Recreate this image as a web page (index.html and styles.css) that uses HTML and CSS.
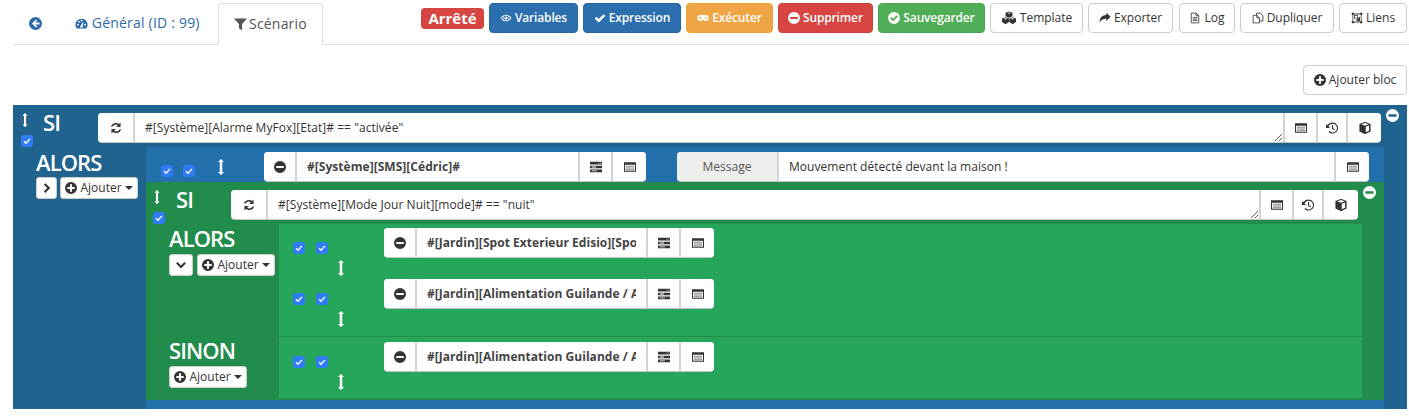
FILE: index.html
```html
<!DOCTYPE html>
<html lang="fr">
<head>
<meta charset="utf-8">
<title>Scénario</title>
<link rel="stylesheet" href="styles.css">
</head>
<body>
<svg class="defs" aria-hidden="true">
  <symbol id="i-back" viewBox="1 1 14 14"><path fill-rule="evenodd" d="M8 1a7 7 0 1 0 0 14A7 7 0 0 0 8 1zM8.6 3.600l1.300 1.300-2 2h4.400v2.200H7.900l2 2-1.300 1.300L4.200 8z"/></symbol>
  <symbol id="i-gauge" viewBox="0 1 16 14"><path fill-rule="evenodd" d="M8 2a7.500 7.500 0 0 0-7.500 7.500c0 1.600.5 3.100 1.400 4.300.2.200.4.200.6.200h11c.2 0 .4 0 .6-.2A7.500 7.500 0 0 0 8 2zM3.500 10.500a1.100 1.100 0 1 1 0-2.200 1.100 1.100 0 0 1 0 2.200zM5 6.800a1.100 1.100 0 1 1 0-2.200 1.100 1.100 0 0 1 0 2.200zM8 5.500a1.100 1.100 0 1 1 0-2.200 1.100 1.100 0 0 1 0 2.200zM9.500 12.300a1.800 1.800 0 0 1-3 0c-.3-.8 0-1.600.8-1.900l2.300-4.400 .8.300-1 4.700c.5.400.6 1 .1 1.300zM12.500 10.500a1.100 1.100 0 1 1 0-2.200 1.100 1.100 0 0 1 0 2.200z"/></symbol>
  <symbol id="i-filter" viewBox="1 2 14 13"><path d="M1 2h14L9.700 8v7L6.300 12.500V8z"/></symbol>
  <symbol id="i-eye" viewBox="0 0 18 16"><path fill-rule="evenodd" d="M9 3C5.500 3 2.500 5 .8 8c1.700 3 4.700 5 8.200 5s6.500-2 8.200-5C15.500 5 12.500 3 9 3zM9 11.800A3.800 3.800 0 1 1 9 4.200a3.800 3.800 0 0 1 0 7.600zM2.400 8c.8-1.200 1.900-2.100 3.100-2.800a4.800 4.800 0 0 0 0 5.600C4.300 10.100 3.200 9.200 2.400 8zM12.500 10.800a4.800 4.800 0 0 0 0-5.600c1.200.7 2.300 1.600 3.100 2.800-.8 1.200-1.900 2.100-3.100 2.800z"/><circle cx="9" cy="8" r="2.300"/></symbol>
  <symbol id="i-check" viewBox="0 0 16 16"><path d="M1 8.600l2.300-2.300 3 3 6.400-6.400L15 5.200l-8.700 8.700z"/></symbol>
  <symbol id="i-game" viewBox="0 0 18 16"><path fill-rule="evenodd" d="M5 3.500h8a4.500 4.500 0 0 1 0 9c-1.500 0-2.300-.8-3-1.500H8c-.7.700-1.500 1.500-3 1.500a4.500 4.500 0 0 1 0-9zM4.200 6v1.300H3v1.400h1.200V10h1.400V8.700h1.200V7.300H5.600V6zM12.500 6.300a1 1 0 1 0 0 2 1 1 0 0 0 0-2zM14.300 7.900a1 1 0 1 0 0 2 1 1 0 0 0 0-2z"/></symbol>
  <symbol id="i-minus" viewBox="1 1 14 14"><path fill-rule="evenodd" d="M8 1a7 7 0 1 0 0 14A7 7 0 0 0 8 1zM3.600 6.700h8.800v2.600H3.600z"/></symbol>
  <symbol id="i-plus" viewBox="1 1 14 14"><path fill-rule="evenodd" d="M8 1a7 7 0 1 0 0 14A7 7 0 0 0 8 1zM6.800 3.700h2.400v3.100h3.100v2.400H9.200v3.100H6.800V9.200H3.700V6.800h3.100z"/></symbol>
  <symbol id="i-okc" viewBox="1 1 14 14"><path fill-rule="evenodd" d="M8 1a7 7 0 1 0 0 14A7 7 0 0 0 8 1zM7 11.800L3.500 8.300l1.500-1.500 2 2 4-4 1.500 1.500z"/></symbol>
  <symbol id="i-cubes" viewBox="0 0 18 16"><path fill-rule="evenodd" d="M9 .5l4 1.600v3.900L9 7.700 5 6V2.100zM7 2.400L9 3.200l2-.8-2-.7zM5 7l4 1.600v3.900l-4 2.500-4-2.300V8.600zM3 8.900L5 9.700l2-.8-2-.8zM13 7l4 1.600v3.900L13 15l-3.600-2.300V8.600zM11 8.900l2 .8 2-.8-2-.8z"/></symbol>
  <symbol id="i-share" viewBox="0 0 16 16"><path d="M15.500 6.200L9.800 1v3C4 4.200 1 7.500.8 14c1.700-3.500 4.500-5.200 9-5.100v3.100z"/></symbol>
  <symbol id="i-file" viewBox="0 0 16 16"><path fill="none" stroke="currentColor" stroke-width="1.100" d="M3 1.500h6.500l3.500 3.500v9.500H3zM9.500 1.500V5H13M5 7.500h6M5 9.500h6M5 11.500h6"/></symbol>
  <symbol id="i-copy" viewBox="0 0 16 16"><path fill="none" stroke="currentColor" stroke-width="1.100" d="M6 4.500V1.500h5l3.500 3.500v7H10M1.500 4.500h5L10 8v6.500H1.500zM6.500 4.500V8H10"/></symbol>
  <symbol id="i-group" viewBox="0 0 16 16"><path fill-rule="evenodd" d="M1 1h3v1h8V1h3v3h-1v8h1v3h-3v-1H4v1H1v-3h1V4H1zM3 3.200V12.800h1 8 1V3.200H4zM4 4h5v4.500H4zM5 5v2.500h3V5zM7.500 9.500h1V8.500H10V6.500h2V12H7.500z"/></symbol>
  <symbol id="i-refresh" viewBox="1 1 14 14"><path d="M13.300 1.700v5.100H8.200l2-2A4.300 4.300 0 0 0 4 6.300H1.900a6.300 6.300 0 0 1 9.700-2.900zM2.700 14.300V9.200h5.100l-2 2A4.300 4.300 0 0 0 12 9.700h2.100a6.300 6.300 0 0 1-9.700 2.900z"/></symbol>
  <symbol id="i-history" viewBox="1 1 14 14"><path d="M8.500 1.500a6.500 6.500 0 1 1-4.600 11.100l1-1a5.100 5.100 0 1 0-1-5.300l1.900 1.700H1V3.200l1.700 1.700A6.500 6.500 0 0 1 8.500 1.500zM7.900 4.500h1.300v3.700l2.200 1.300-.7 1.100-2.800-1.700z"/></symbol>
  <symbol id="i-cube" viewBox="1 1 14 14"><path fill-rule="evenodd" d="M8 .8l6.500 2.400v9L8 15.200 1.500 12.200v-9zM3.600 3.600L8 5.300l4.400-1.700L8 2.200zM8.900 13l3.800-1.800V5L8.900 6.500z"/></symbol>
  <symbol id="i-list" viewBox="1 2 14 12"><path fill-rule="evenodd" d="M1 2.500h14v11H1zM2.200 5.500v7h11.600v-7z"/><path d="M3.200 6.500h9.600v1.300H3.200zM3.200 8.500h9.600v1.300H3.200zM3.200 10.500h9.600v1.300H3.200z" opacity=".6"/></symbol>
  <symbol id="i-server" viewBox="1 1 14 14"><path fill-rule="evenodd" d="M1 2h14v3H1zM1 6.500h14v3H1zM1 11h14v3H1zM11 3v1h1V3zM13 3v1h1V3zM3 7.500v1h5v-1zM3 12v1h6v-1z"/></symbol>
  <symbol id="i-right" viewBox="0 0 16 16"><path d="M4.800 1.500l6.500 6.500-6.500 6.500-2-2L7.300 8 2.800 3.500z" transform="translate(1)"/></symbol>
  <symbol id="i-down" viewBox="0 0 16 16"><path d="M1.500 6l2-2L8 8.500 12.500 4l2 2L8 12.500z"/></symbol>
  <symbol id="i-arrows" viewBox="0 0 8 16"><path d="M4 0l3 3H5.200v10H7l-3 3-3-3h1.800V3H1z"/></symbol>
  <symbol id="i-tick" viewBox="0 0 12 12"><path fill="none" stroke="#fff" stroke-width="1.400" d="M3 6.300l2 2 4-4.400"/></symbol>
</svg>

<header class="topbar">
  <nav class="tabs">
    <a class="tab tab-back"><svg class="ico ico-lg"><use href="#i-back"/></svg></a>
    <a class="tab tab-gen"><svg class="ico ico-lg"><use href="#i-gauge"/></svg> Général (ID : 99)</a>
    <a class="tab tab-active"><svg class="ico ico-lg"><use href="#i-filter"/></svg>Scénario</a>
  </nav>
  <div class="actions">
    <span class="badge">Arrêté</span>
    <button class="btn btn-blue btn-w89"><svg class="ico"><use href="#i-eye"/></svg> Variables</button>
    <button class="btn btn-blue btn-w98"><svg class="ico"><use href="#i-check"/></svg> Expression</button>
    <button class="btn btn-orange btn-w87"><svg class="ico"><use href="#i-game"/></svg> Exécuter</button>
    <button class="btn btn-red btn-w95"><svg class="ico"><use href="#i-minus"/></svg> Supprimer</button>
    <button class="btn btn-green btn-w107"><svg class="ico"><use href="#i-okc"/></svg> Sauvegarder</button>
    <button class="btn btn-w93"><svg class="ico ico-big"><use href="#i-cubes"/></svg> Template</button>
    <button class="btn btn-w85"><svg class="ico"><use href="#i-share"/></svg> Exporter</button>
    <button class="btn btn-w56"><svg class="ico"><use href="#i-file"/></svg> Log</button>
    <button class="btn btn-w94"><svg class="ico"><use href="#i-copy"/></svg> Dupliquer</button>
    <button class="btn btn-w68"><svg class="ico"><use href="#i-group"/></svg> Liens</button>
  </div>
</header>

<div class="toolbar">
  <button class="btn btn-w104"><svg class="ico"><use href="#i-plus"/></svg> Ajouter bloc</button>
</div>

<main class="block block-blue">
  <svg class="ico ico-close"><use href="#i-minus"/></svg>
  <div class="cond">
    <div class="cond-head">
      <div class="cond-mark"><svg class="arrows"><use href="#i-arrows"/></svg><span class="cb"><svg><use href="#i-tick"/></svg></span></div>
      <span class="title">SI</span>
    </div>
    <div class="group group-fill">
      <button class="addon addon-36"><svg class="ico"><use href="#i-refresh"/></svg></button>
      <textarea class="field field-area" spellcheck="false">#[Système][Alarme MyFox][Etat]# == "activée"</textarea>
      <button class="addon addon-33"><svg class="ico"><use href="#i-list"/></svg></button>
      <button class="addon addon-30"><svg class="ico"><use href="#i-history"/></svg></button>
      <button class="addon addon-34"><svg class="ico"><use href="#i-cube"/></svg></button>
    </div>
  </div>

  <section class="branch">
    <div class="branch-side side-top">
      <span class="title title-lg">ALORS</span>
      <div class="side-btns">
        <button class="btn-xs btn-square"><svg class="ico"><use href="#i-right"/></svg></button>
        <button class="btn-xs btn-add"><svg class="ico"><use href="#i-plus"/></svg> Ajouter <i class="caret"></i></button>
      </div>
    </div>
    <div class="branch-body body-blue">
      <div class="action-top">
        <span class="cb"><svg><use href="#i-tick"/></svg></span>
        <span class="cb cb-next"><svg><use href="#i-tick"/></svg></span>
        <svg class="arrows arrows-top"><use href="#i-arrows"/></svg>
        <div class="group group-cmd">
          <button class="addon addon-32"><svg class="ico"><use href="#i-minus"/></svg></button>
          <input class="field field-bold" value="#[Système][SMS][Cédric]#" spellcheck="false">
          <button class="addon addon-33"><svg class="ico"><use href="#i-server"/></svg></button>
          <button class="addon addon-34"><svg class="ico"><use href="#i-list"/></svg></button>
        </div>
        <div class="group group-msg">
          <span class="addon addon-label">Message</span>
          <input class="field" value="Mouvement détecté devant la maison !" spellcheck="false">
          <button class="addon addon-34"><svg class="ico"><use href="#i-list"/></svg></button>
        </div>
      </div>

      <div class="block block-green">
        <svg class="ico ico-close ico-close-in"><use href="#i-minus"/></svg>
        <div class="cond cond-in">
          <div class="cond-head">
            <div class="cond-mark mark-in"><svg class="arrows"><use href="#i-arrows"/></svg><span class="cb"><svg><use href="#i-tick"/></svg></span></div>
            <span class="title">SI</span>
          </div>
          <div class="group group-fill">
            <button class="addon addon-36"><svg class="ico"><use href="#i-refresh"/></svg></button>
            <textarea class="field field-area" spellcheck="false">#[Système][Mode Jour Nuit][mode]# == "nuit"</textarea>
            <button class="addon addon-33"><svg class="ico"><use href="#i-list"/></svg></button>
            <button class="addon addon-30"><svg class="ico"><use href="#i-history"/></svg></button>
            <button class="addon addon-35"><svg class="ico"><use href="#i-cube"/></svg></button>
          </div>
        </div>

        <section class="branch branch-in">
          <div class="branch-side side-green">
            <span class="title title-lg">ALORS</span>
            <div class="side-btns side-btns-in">
              <button class="btn-xs btn-square btn-sq24"><svg class="ico"><use href="#i-down"/></svg></button>
              <button class="btn-xs btn-add"><svg class="ico"><use href="#i-plus"/></svg> Ajouter <i class="caret"></i></button>
            </div>
          </div>
          <div class="branch-body body-green body-alors">
            <div class="action">
              <div class="action-ctl"><div class="cbs"><span class="cb"><svg><use href="#i-tick"/></svg></span><span class="cb"><svg><use href="#i-tick"/></svg></span></div><svg class="arrows"><use href="#i-arrows"/></svg></div>
              <div class="group group-act">
                <button class="addon addon-32"><svg class="ico"><use href="#i-minus"/></svg></button>
                <input class="field field-bold" value="#[Jardin][Spot Exterieur Edisio][Spot Exterieur]#" spellcheck="false">
                <button class="addon addon-33"><svg class="ico"><use href="#i-server"/></svg></button>
                <button class="addon addon-34"><svg class="ico"><use href="#i-list"/></svg></button>
              </div>
            </div>
            <div class="action">
              <div class="action-ctl"><div class="cbs"><span class="cb"><svg><use href="#i-tick"/></svg></span><span class="cb"><svg><use href="#i-tick"/></svg></span></div><svg class="arrows"><use href="#i-arrows"/></svg></div>
              <div class="group group-act">
                <button class="addon addon-32"><svg class="ico"><use href="#i-minus"/></svg></button>
                <input class="field field-bold" value="#[Jardin][Alimentation Guilande / Arbre]#" spellcheck="false">
                <button class="addon addon-33"><svg class="ico"><use href="#i-server"/></svg></button>
                <button class="addon addon-34"><svg class="ico"><use href="#i-list"/></svg></button>
              </div>
            </div>
          </div>
          <div class="branch-side side-green side-sinon">
            <span class="title title-lg">SINON</span>
            <div class="side-btns side-btns-in">
              <button class="btn-xs btn-add"><svg class="ico"><use href="#i-plus"/></svg> Ajouter <i class="caret"></i></button>
            </div>
          </div>
          <div class="branch-body body-green body-sinon">
            <div class="action">
              <div class="action-ctl"><div class="cbs"><span class="cb"><svg><use href="#i-tick"/></svg></span><span class="cb"><svg><use href="#i-tick"/></svg></span></div><svg class="arrows"><use href="#i-arrows"/></svg></div>
              <div class="group group-act">
                <button class="addon addon-32"><svg class="ico"><use href="#i-minus"/></svg></button>
                <input class="field field-bold" value="#[Jardin][Alimentation Guilande / Arbre]#" spellcheck="false">
                <button class="addon addon-33"><svg class="ico"><use href="#i-server"/></svg></button>
                <button class="addon addon-34"><svg class="ico"><use href="#i-list"/></svg></button>
              </div>
            </div>
          </div>
        </section>
      </div>
    </div>
  </section>
</main>
</body>
</html>
```
FILE: styles.css
```css
* { box-sizing: border-box; }
html, body { margin: 0; padding: 0; }
body {
  background: #fff;
  color: #333;
  font-family: "Open Sans", "Liberation Sans", sans-serif;
  font-size: 12px;
  overflow: hidden;
}
.defs { display: none; }
button, input, textarea { font-family: inherit; font-size: 12px; color: #333; margin: 0; }

.ico { width: 12px; height: 12px; fill: currentColor; vertical-align: -2px; flex: none; }
.ico-lg { width: 13px; height: 13px; vertical-align: -2px; }
.ico-big { width: 16px; height: 14px; vertical-align: -3px; }

/* top bar */
.topbar {
  display: flex;
  height: 45px;
  margin-left: 13px;
  padding-right: 2px;
  border-bottom: 1px solid #ddd;
}
.tabs { display: flex; align-items: flex-end; }
.tab {
  display: block;
  height: 42px;
  padding: 11px 0 0;
  font-size: 14px;
  line-height: 20px;
  letter-spacing: .2px;
  color: #2c6ba8;
}
.tab-back { width: 49px; padding-left: 16px; }
.tab-gen { width: 156px; padding-left: 13px; }
.tab-active {
  width: 105px;
  height: 42px;
  margin-bottom: -1px;
  padding: 10px 0 0 15px;
  color: #555;
  background: #fff;
  border: 1px solid #ddd;
  border-bottom-color: #fff;
  border-radius: 4px 4px 0 0;
}
.tab-active .ico { margin-right: 2px; }
.actions { display: flex; align-items: flex-start; margin-left: auto; padding-top: 3px; gap: 5px; }
.badge {
  width: 63px;
  height: 21px;
  margin-top: 5px;
  background: #d64541;
  color: #fff;
  font-size: 15px;
  font-weight: 700;
  line-height: 20px;
  text-align: center;
  border-radius: 4px;
}
.btn {
  height: 30px;
  padding: 0;
  background: #fff;
  border: 1px solid #ccc;
  border-radius: 4px;
  line-height: 18px;
  white-space: nowrap;
  text-align: center;
}
.btn-blue { background: #2c6eae; border-color: #28659f; color: #fff; font-weight: 600; letter-spacing: -.15px; }
.btn-orange { background: #f0a545; border-color: #eea236; color: #fff; font-weight: 600; letter-spacing: -.15px; }
.btn-red { background: #d64541; border-color: #c9403c; color: #fff; font-weight: 600; letter-spacing: -.15px; }
.btn-green { background: #4fae56; border-color: #49a54f; color: #fff; font-weight: 600; letter-spacing: -.15px; }
.btn-w89 { width: 89px; } .btn-w98 { width: 98px; } .btn-w87 { width: 87px; }
.btn-w95 { width: 95px; } .btn-w107 { width: 107px; } .btn-w93 { width: 93px; }
.btn-w85 { width: 85px; margin-right: 1px; } .btn-w56 { width: 56px; } .btn-w94 { width: 94px; }
.btn-w68 { width: 68px; } .btn-w104 { width: 104px; }

.toolbar { display: flex; justify-content: flex-end; padding: 20px 2px 10px 0; }

/* blocks */
.block { position: relative; }
.block-blue { margin: 0 2px 0 13px; padding-top: 8px; background: #20638f; }
.block-green { padding: 8px 22px 2px 0; background: #218c4b; }
.ico-close { position: absolute; top: 4px; right: 8px; width: 13px; height: 13px; color: #fff; fill: #fff; }
.ico-close-in { top: 4px; right: 8px; }

.cond { display: flex; height: 34px; padding-right: 26px; }
.cond-in { padding-right: 4px; }
.cond-head { display: flex; width: 85px; flex: none; }
.cond-mark { width: 30px; padding: 0 0 0 8px; display: flex; flex-direction: column; }
.cond-mark .arrows { margin: 0 0 8px 0; }
.mark-in { width: 30px; padding-left: 7px; }
.title { color: #fff; font-size: 22px; font-weight: 600; line-height: 20px; letter-spacing: -.9px; margin-top: -1px; }
.title-lg { display: block; margin-top: -1px; line-height: 24px; }

.arrows { display: block; width: 8px; height: 16px; fill: #fff; }
.cb {
  display: block;
  width: 12px;
  height: 12px;
  background: #2f7cf6;
  border-radius: 3px;
  flex: none;
}
.cb svg { display: block; width: 12px; height: 12px; }

/* input groups */
.group { display: flex; height: 29px; background: #fff; border-radius: 4px; box-shadow: 0 1px 0 #c4c4c4; }
.group-fill { flex: 1; }
.group-cmd { width: 382px; margin-left: 39px; }
.group-msg { width: 692px; margin-left: 31px; }
.group-act { width: 330px; }
.addon {
  display: block;
  height: 29px;
  padding: 0;
  flex: none;
  background: #fff;
  border: 0;
  border-left: 1px solid #d4d4d4;
  border-right: 1px solid #d4d4d4;
  color: #333;
  line-height: 29px;
  text-align: center;
}
.addon:first-child { border-left: 0; border-radius: 4px 0 0 4px; }
.addon:last-child { border-right: 0; border-radius: 0 4px 4px 0; }
.addon-30 { width: 30px; } .addon-32 { width: 32px; } .addon-33 { width: 33px; }
.addon-34 { width: 34px; } .addon-35 { width: 35px; } .addon-36 { width: 36px; }
.addon-label { width: 101px; background: #eee; color: #555; }
.field {
  display: block;
  flex: 1;
  min-width: 0;
  height: 29px;
  padding: 0 10px;
  background: #fff;
  border: 0;
  border-left: 1px solid #d4d4d4;
  border-right: 1px solid #d4d4d4;
  border-radius: 0;
  outline: 0;
  line-height: 28px;
  letter-spacing: .04px;
}
.field-area { padding-top: 7px; line-height: 16px; overflow: hidden; resize: vertical; }
.field-bold { font-weight: 700; color: #444; }

/* branches */
.branch { display: grid; grid-template-columns: 133px 1238px; }
.branch-in { grid-template-columns: 133px 1083px; }
.branch-side { background: #20638f; }
.side-top { padding: 4px 0 0 23px; }
.side-btns { display: flex; gap: 3px; margin-top: 3px; }
.side-btns-in { gap: 4px; margin-top: 4px; }
.side-green { background: #218c4b; padding: 3px 0 0 23px; }
.side-sinon { padding-top: 2px; }
.body-blue { padding-bottom: 9px; background: #2470ad; }
.action-top { display: flex; align-items: flex-start; height: 35px; padding: 5px 0 0 15px; }
.action-top .cb { margin-top: 13px; }
.action-top .cb.cb-next { margin-left: 10px; }
.arrows-top { margin: 7px 0 0 22px; }
.body-green { background: #26a65b; }
.body-alors { height: 113px; border-bottom: 1px solid #218c4b; padding-top: 4px; }
.body-sinon { height: 61px; padding-top: 5px; }
.action { display: flex; height: 51px; }
.action-ctl { width: 105px; flex: none; padding: 14px 0 0 14px; }
.cbs { display: flex; gap: 11px; }
.action-ctl .arrows { margin: 6px 0 0 44px; }

.btn-xs {
  height: 22px;
  padding: 0;
  background: #fff;
  border: 1px solid #ccc;
  border-radius: 3px;
  line-height: 18px;
  white-space: nowrap;
}
.btn-square { width: 21px; }
.btn-sq24 { width: 24px; }
.btn-add { width: 78px; }
.caret {
  display: inline-block;
  width: 0;
  height: 0;
  vertical-align: 2px;
  border-top: 4px solid #333;
  border-left: 4px solid transparent;
  border-right: 4px solid transparent;
}
```
